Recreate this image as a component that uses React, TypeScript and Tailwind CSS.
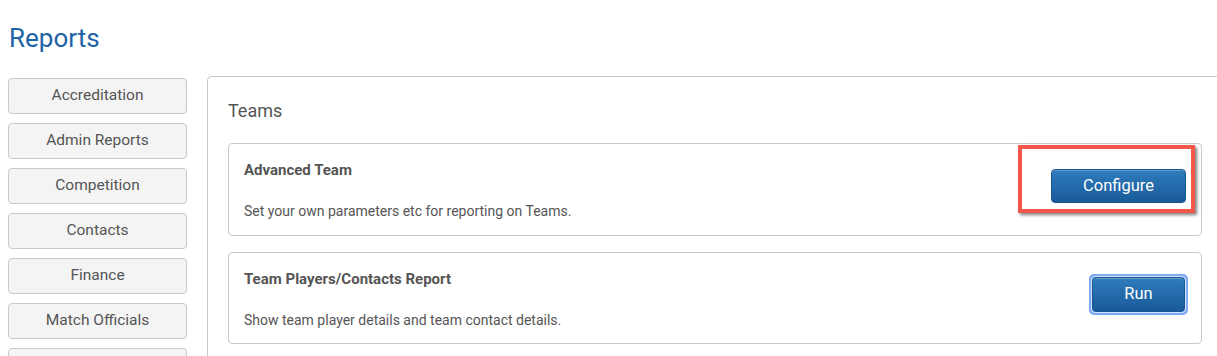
import React from "react";

const font = { fontFamily: "Roboto, 'Liberation Sans', sans-serif" };

const sideItems = [
  "Accreditation",
  "Admin Reports",
  "Competition",
  "Contacts",
  "Finance",
  "Match Officials",
  "",
];

function BlueButton({ label, w, h }: { label: string; w: string; h: string }) {
  return (
    <button
      className={`${w} ${h} block rounded-[4px] border border-[#1a5592] bg-gradient-to-b from-[#2f7cbd] to-[#195a99] text-[16.5px] text-white shadow-[inset_0_1px_0_rgba(255,255,255,0.25)]`}
    >
      {label}
    </button>
  );
}

export default function App() {
  return (
    <div className="h-[356px] w-[1217px] overflow-hidden bg-white" style={font}>
      <div className="pl-[9px] pt-[22px] h-[76px]">
        <h1 className="text-[26px] leading-[32px] text-[#1e63a6]">Reports</h1>
      </div>
      <div className="flex">
        <div className="ml-[8px] mt-[2px] flex w-[180px] flex-col gap-[9px]">
          {sideItems.map((s, i) => (
            <div
              key={i}
              className="flex h-[36px] items-center justify-center rounded-[4px] border border-[#c9c9c9] bg-[#f4f4f4] text-[15.5px] text-[#555]"
            >
              {s}
            </div>
          ))}
        </div>
        <div className="ml-[20px] w-[1010px] shrink-0 rounded-tl-[5px] border-l border-t border-[#c8c8c8] pl-[20px] pr-[15px] pt-[22px]">
          <h2 className="text-[18px] leading-[24px] text-[#555]">Teams</h2>
          <div className="mt-[20px] flex flex-col gap-[16px]">
            <div className="flex h-[93px] items-start rounded-[4px] border border-[#c8c8c8] pl-[15px] pr-[15px]">
              <div className="flex-1 pt-[16px]">
                <div className="text-[15px] font-bold leading-[20px] text-[#555]">Advanced Team</div>
                <div className="mt-[21px] text-[14px] leading-[20px] text-[#555]">
                  Set your own parameters etc for reporting on Teams.
                </div>
              </div>
              <div className="relative mt-[25px]">
                <BlueButton label="Configure" w="w-[135px]" h="h-[34px]" />
                <div className="pointer-events-none absolute left-[-33px] top-[-24px] right-[-9px] bottom-[-10px] border-[4px] border-[#f2574a] shadow-[2px_2px_3px_rgba(0,0,0,0.5)]" />
              </div>
            </div>
            <div className="flex h-[92px] items-start rounded-[4px] border border-[#c8c8c8] pl-[15px] pr-[13px]">
              <div className="flex-1 pt-[16px]">
                <div className="text-[15px] font-bold leading-[20px] text-[#555]">Team Players/Contacts Report</div>
                <div className="mt-[21px] text-[14px] leading-[20px] text-[#555]">
                  Show team player details and team contact details.
                </div>
              </div>
              <div className="mt-[21px]">
                <div className="rounded-[5px] p-[2px] bg-[#7eaaf3]">
                  <div className="rounded-[4px] border border-[#d5e4fb]">
                    <BlueButton label="Run" w="w-[93px]" h="h-[35px]" />
                  </div>
                </div>
              </div>
            </div>
          </div>
        </div>
      </div>
    </div>
  );
}
